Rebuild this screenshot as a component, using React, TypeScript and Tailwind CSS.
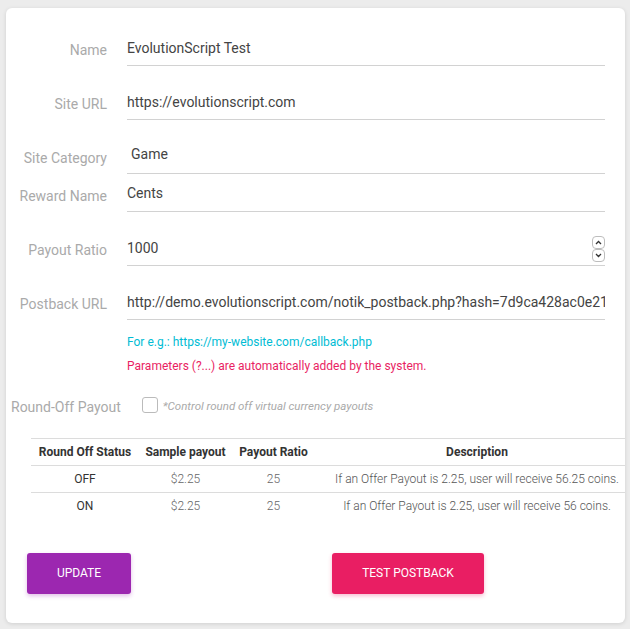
function Field({
  label,
  value,
  gap = "mt-[19px]",
  valueClass = "",
  children,
}: {
  label: string;
  value: string;
  gap?: string;
  valueClass?: string;
  children?: React.ReactNode;
}) {
  return (
    <div className={`flex items-center ${gap}`}>
      <label className="w-[101px] shrink-0 text-right text-[14px] text-[#aaaaaa] pt-[3px]">{label}</label>
      <div className="ml-[20px] flex-1 min-w-0 h-[35px] border-b border-[#d2d2d2] flex items-center relative overflow-hidden">
        <span className={`text-[14px] text-[#444] whitespace-nowrap ${valueClass}`}>{value}</span>
        {children}
      </div>
    </div>
  );
}

function Chevron({ up }: { up?: boolean }) {
  return (
    <div className="w-[13px] h-[13px] border border-[#bdbdbd] rounded-[4px] flex items-center justify-center bg-white">
      <svg width="7" height="5" viewBox="0 0 7 5" fill="none">
        <path d={up ? "M1 4L3.5 1.5L6 4" : "M1 1L3.5 3.5L6 1"} stroke="#333" strokeWidth="1.3" />
      </svg>
    </div>
  );
}

const rows = [
  { status: "OFF", sample: "$2.25", ratio: "25", desc: "If an Offer Payout is 2.25, user will receive 56.25 coins." },
  { status: "ON", sample: "$2.25", ratio: "25", desc: "If an Offer Payout is 2.25, user will receive 56 coins." },
];

export default function App() {
  return (
    <div className="min-h-[629px] bg-[#ececec] pt-[8px] pl-[6px] pr-[5px] pb-[7px] font-['Roboto',sans-serif]">
      <div className="bg-white rounded-[6px] shadow-[0_1px_4px_rgba(0,0,0,0.12)] overflow-hidden pt-[23px] pb-[29px] pr-[20px]">
        <Field label="Name" value="EvolutionScript Test" gap="mt-0" />
        <Field label="Site URL" value="https://evolutionscript.com" />
        <Field label="Site Category" value="Game" valueClass="pl-[4px] -mt-[4px]" />
        <Field label="Reward Name" value="Cents" gap="mt-[3px]" valueClass="-mt-[1px]" />
        <Field label="Payout Ratio" value="1000">
          <div className="absolute right-0 top-[5px] flex flex-col">
            <Chevron up />
            <Chevron />
          </div>
        </Field>
        <Field label="Postback URL" value="http://demo.evolutionscript.com/notik_postback.php?hash=7d9ca428ac0e21a9f3b" />

        <div className="ml-[121px] mt-[10px] text-[12px] leading-[24px]">
          <p className="text-[#00bcd4]">For e.g.: https://my-website.com/callback.php</p>
          <p className="text-[#e91e63]">Parameters (?...) are automatically added by the system.</p>
        </div>

        <div className="flex items-center mt-[17px] h-[24px]">
          <span className="ml-[5px] text-[14px] text-[#aaaaaa]">Round-Off Payout</span>
          <span className="ml-[21px] w-[16px] h-[16px] border border-[#bbbbbb] rounded-[3px] -mt-[5px]" />
          <span className="ml-[5px] text-[11.5px] italic text-[#aaaaaa]">*Control round off virtual currency payouts</span>
        </div>

        <div className="mt-[19px] ml-[25px] w-[608px]">
          <table className="table-fixed w-[608px] border-collapse text-[12px]">
            <colgroup>
              <col className="w-[108px]" />
              <col className="w-[93px]" />
              <col className="w-[83px]" />
              <col className="w-[324px]" />
            </colgroup>
            <thead>
              <tr className="border-t border-b border-[#dcdcdc] h-[27px]">
                <th className="font-bold text-[#333] text-center">Round Off Status</th>
                <th className="font-bold text-[#333] text-center">Sample payout</th>
                <th className="font-bold text-[#333] text-center">Payout Ratio</th>
                <th className="font-bold text-[#333] text-center">Description</th>
              </tr>
            </thead>
            <tbody>
              {rows.map((r, i) => (
                <tr key={r.status} className={`h-[27px] ${i === 0 ? "border-b border-[#dcdcdc]" : ""}`}>
                  <td className="text-center text-[#333]">{r.status}</td>
                  <td className="text-center text-[#666] font-light">{r.sample}</td>
                  <td className="text-center text-[#666] font-light">{r.ratio}</td>
                  <td className="text-center text-[#555] font-light whitespace-nowrap">{r.desc}</td>
                </tr>
              ))}
            </tbody>
          </table>
        </div>

        <div className="flex mt-[33px] ml-[21px]">
          <button className="w-[104px] h-[41px] rounded-[3px] bg-[#9c27b0] text-white text-[12px] uppercase shadow-[0_2px_4px_rgba(156,39,176,0.3)]">
            Update
          </button>
          <button className="ml-[201px] w-[152px] h-[41px] rounded-[3px] bg-[#e91e63] text-white text-[12px] uppercase shadow-[0_2px_4px_rgba(233,30,99,0.3)]">
            Test Postback
          </button>
        </div>
      </div>
    </div>
  );
}
